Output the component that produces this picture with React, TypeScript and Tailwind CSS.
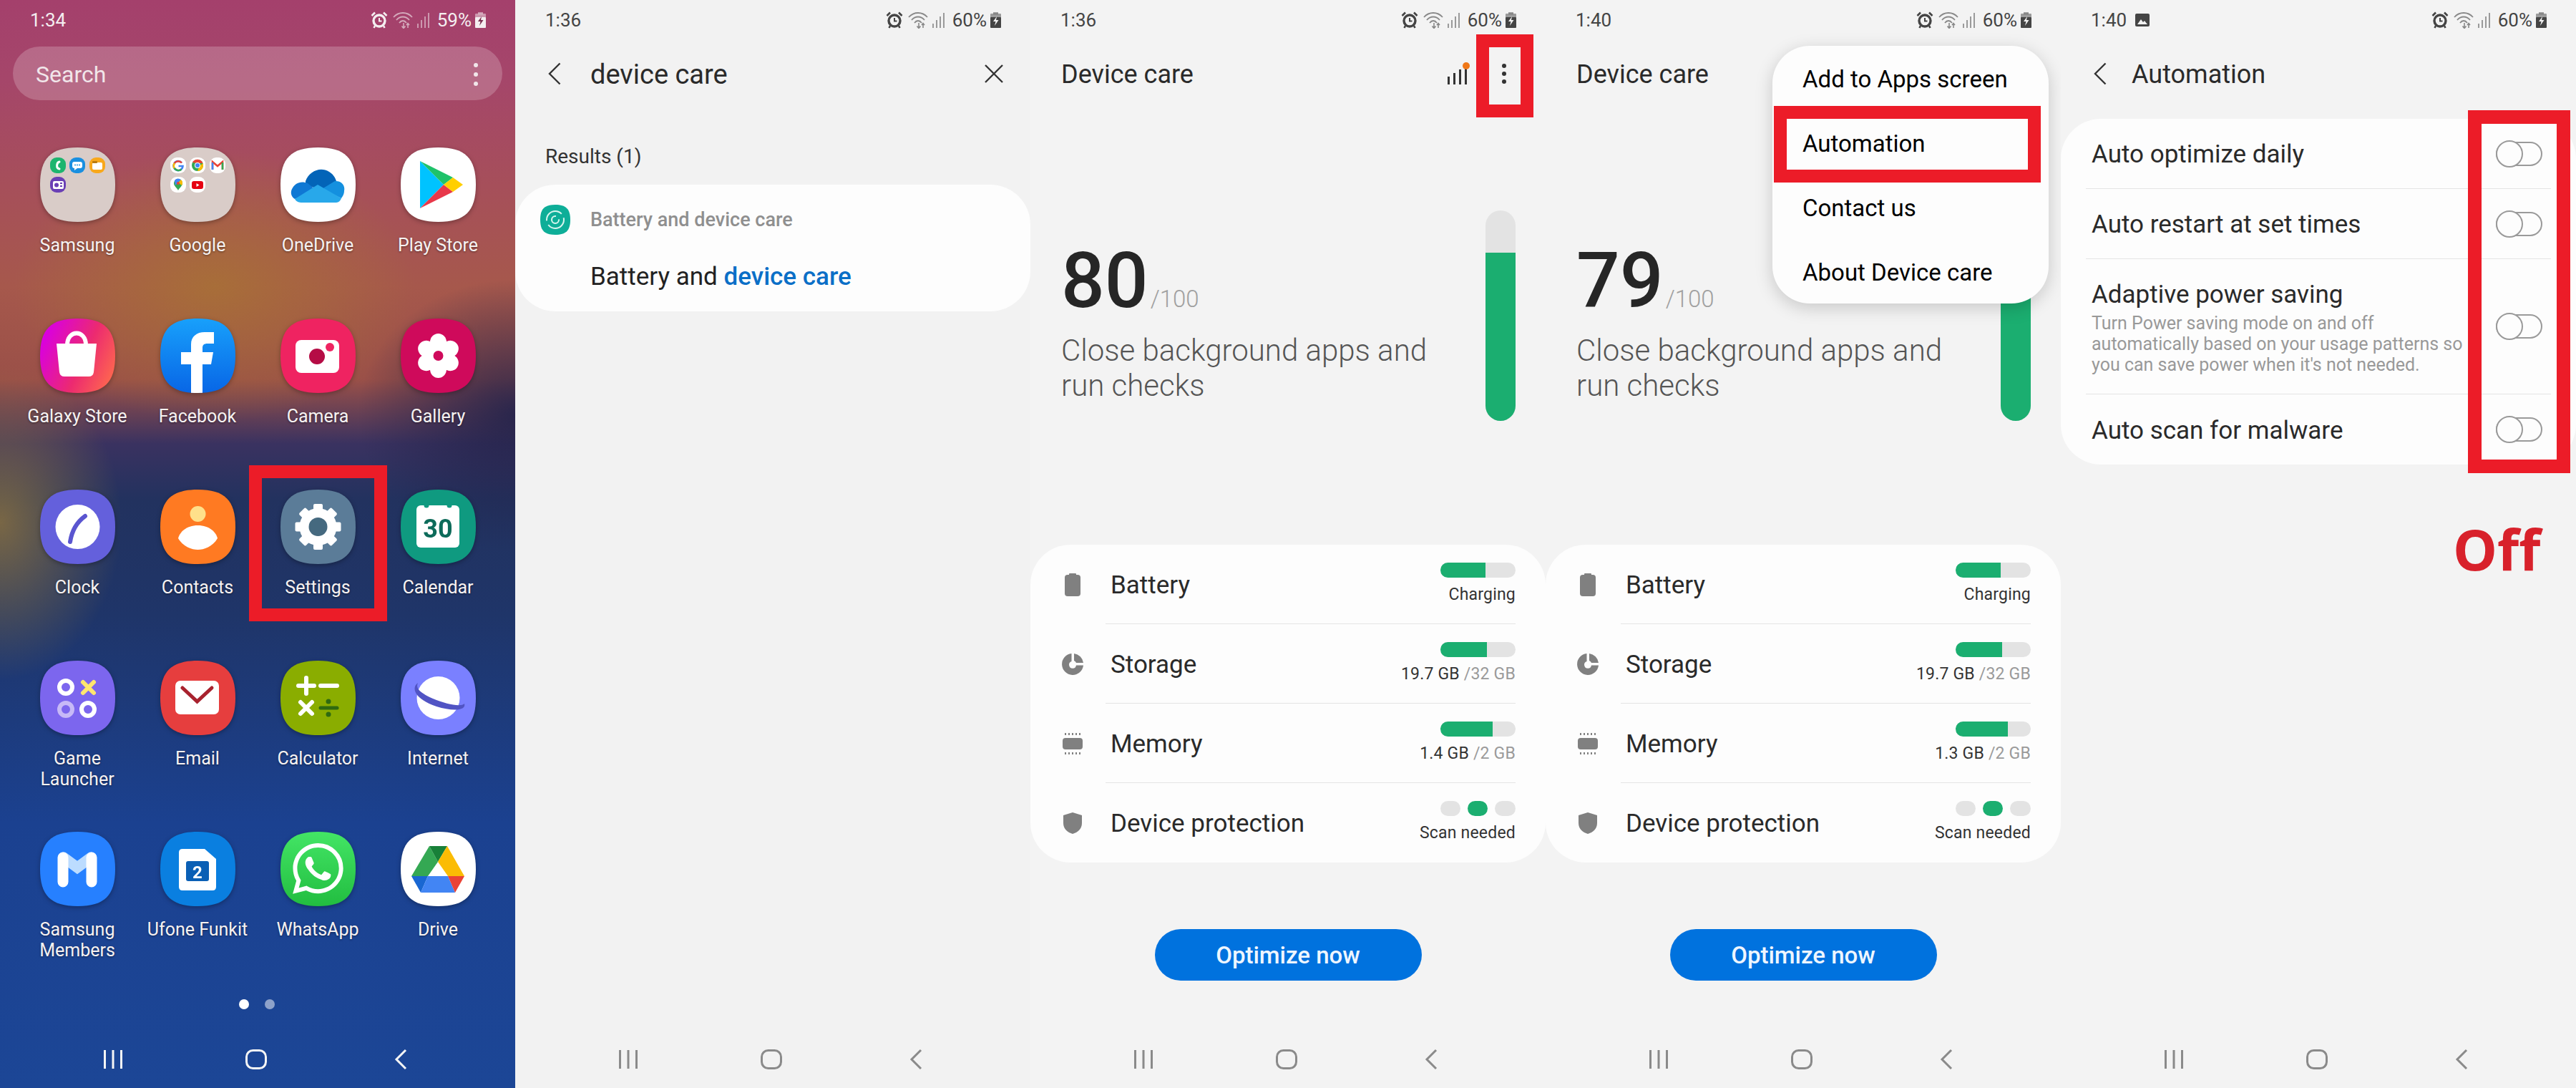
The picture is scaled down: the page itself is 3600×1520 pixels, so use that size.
import type { ReactNode } from "react";

const squircle =
  "M52.5 0C90 0 105 15 105 52C105 89 90 104 52.5 104C15 104 0 89 0 52C0 15 15 0 52.5 0Z";

function AppGlyph({ fill, children }: { fill: string; children?: ReactNode }) {
  return (
    <svg
      viewBox="0 0 105 104"
      className="h-[104px] w-[105px] overflow-visible drop-shadow-[0_2px_3px_rgba(0,0,0,0.3)]"
    >
      <defs>
        <clipPath id="squircleClip">
          <path d={squircle} />
        </clipPath>
        <linearGradient id="storeGrad" x1="0" y1="0.35" x2="1" y2="0.8">
          <stop offset="0" stopColor="#d900e0" />
          <stop offset="0.55" stopColor="#ec2a70" />
          <stop offset="1" stopColor="#ff6a4d" />
        </linearGradient>
        <linearGradient id="fbGrad" x1="0" y1="0" x2="0" y2="1">
          <stop offset="0" stopColor="#18a0fb" />
          <stop offset="1" stopColor="#0866e6" />
        </linearGradient>
        <linearGradient id="waGrad" x1="0" y1="0" x2="0" y2="1">
          <stop offset="0" stopColor="#43e565" />
          <stop offset="1" stopColor="#22bd40" />
        </linearGradient>
      </defs>
      <path d={squircle} fill={fill} />
      <g clipPath="url(#squircleClip)">{children}</g>
    </svg>
  );
}

function Mini({ x, y, fill, children }: { x: number; y: number; fill: string; children?: ReactNode }) {
  return (
    <g transform={`translate(${x - 11} ${y - 11})`}>
      <rect width="22" height="22" rx="9" fill={fill} />
      {children}
    </g>
  );
}

const samsungFolder = (
  <AppGlyph fill="#d9ccc8">
    <Mini x={25} y={25} fill="#1db56e">
      <path d="M13 6C9 7 8 15 13 16" stroke="#fff" strokeWidth="3" fill="none" strokeLinecap="round" />
    </Mini>
    <Mini x={52} y={25} fill="#1a8fe0">
      <rect x="4" y="6" width="14" height="9" rx="3" fill="#fff" />
      <path d="M7 14v4l4-3z" fill="#fff" />
      <circle cx="8" cy="10.5" r="1" fill="#1a8fe0" />
      <circle cx="11" cy="10.5" r="1" fill="#1a8fe0" />
      <circle cx="14" cy="10.5" r="1" fill="#1a8fe0" />
    </Mini>
    <Mini x={80} y={25} fill="#f8a81b">
      <rect x="4" y="7" width="14" height="10" rx="2" fill="#fff" />
      <rect x="4" y="5" width="7" height="3" rx="1" fill="#b87a10" />
    </Mini>
    <Mini x={25} y={52} fill="#6a3fb5">
      <rect x="4" y="6" width="15" height="11" rx="2" fill="#fff" />
      <circle cx="9" cy="11.5" r="3" fill="#6a3fb5" />
      <rect x="14" y="8" width="3" height="2" fill="#6a3fb5" />
      <rect x="14" y="12" width="3" height="2" fill="#6a3fb5" />
    </Mini>
  </AppGlyph>
);

const googleFolder = (
  <AppGlyph fill="#d9ccc8">
    <Mini x={25} y={25} fill="#fff">
      <path d="M16 7.5A6.5 6.5 0 1 0 17.5 12H11.5" fill="none" stroke="#4285f4" strokeWidth="2.6" />
      <path d="M16 7.5A6.5 6.5 0 0 0 5.8 8" fill="none" stroke="#ea4335" strokeWidth="2.6" />
      <path d="M5.8 8A6.5 6.5 0 0 0 5.8 15" fill="none" stroke="#fbbc04" strokeWidth="2.6" />
      <path d="M5.8 15A6.5 6.5 0 0 0 15.5 16.5" fill="none" stroke="#34a853" strokeWidth="2.6" />
    </Mini>
    <Mini x={52} y={25} fill="#fff">
      <circle cx="11" cy="11" r="8" fill="#34a853" />
      <path d="M4 7A8 8 0 0 1 18.5 8H11Z" fill="#ea4335" />
      <path d="M18.5 8A8 8 0 0 1 11 19L14 12Z" fill="#fbbc04" />
      <circle cx="11" cy="11" r="4" fill="#fff" />
      <circle cx="11" cy="11" r="3" fill="#4285f4" />
    </Mini>
    <Mini x={80} y={25} fill="#fff">
      <path d="M4 17V6l7 6 7-6v11" fill="none" stroke="#ea4335" strokeWidth="2.6" />
      <path d="M4 17V7" stroke="#4285f4" strokeWidth="2.6" />
      <path d="M18 17V7" stroke="#34a853" strokeWidth="2.6" />
    </Mini>
    <Mini x={25} y={52} fill="#fff">
      <path d="M11 3a6 6 0 0 1 6 6c0 4-4 6-6 10-2-4-6-6-6-10a6 6 0 0 1 6-6Z" fill="#34a853" />
      <path d="M6 5a6 6 0 0 1 9-1L7 12Z" fill="#4285f4" />
      <path d="M15 4a6 6 0 0 1 1 8l-5-4Z" fill="#fbbc04" />
      <circle cx="11" cy="9" r="2" fill="#ea4335" />
    </Mini>
    <Mini x={52} y={52} fill="#fff">
      <rect x="3" y="6" width="16" height="11" rx="3" fill="#e60012" />
      <path d="M9.5 9v5l4-2.5z" fill="#fff" />
    </Mini>
  </AppGlyph>
);

const gearTeeth = [0, 45, 90, 135, 180, 225, 270, 315];

const apps: { label: ReactNode; icon: ReactNode }[] = [
  { label: "Samsung", icon: samsungFolder },
  { label: "Google", icon: googleFolder },
  {
    label: "OneDrive",
    icon: (
      <AppGlyph fill="#fff">
        <path d="M35 47C40 33 56 26 68 34C73 37 76 41 78 47L58 60L35 52Z" fill="#0364b8" />
        <path d="M38 50C28 46 20 50 16 58C13 64 16 70 20 72L50 60Z" fill="#0f78d4" />
        <path d="M76 47C84 46 91 52 89 61C89 65 87 68 85 71L58 58Z" fill="#1490df" />
        <path d="M20 72C22 76 26 77 30 77H78C81 77 84 74 85 71L52 52Z" fill="#28a8ea" />
      </AppGlyph>
    ),
  },
  {
    label: "Play Store",
    icon: (
      <AppGlyph fill="#fff">
        <path d="M27 19V85L60 52Z" fill="#00c3ff" />
        <path d="M27 19L73 42L60 52Z" fill="#1fc26a" />
        <path d="M27 85L73 62L60 52Z" fill="#e8384a" />
        <path d="M73 42L87 52L73 62L60 52Z" fill="#ffcf00" />
      </AppGlyph>
    ),
  },
  {
    label: "Galaxy Store",
    icon: (
      <AppGlyph fill="url(#storeGrad)">
        <path d="M38 37C38 15 64 15 64 37" fill="none" stroke="#fff" strokeWidth="6" />
        <path d="M23 35H79L75 75Q74 81 68 81H34Q28 81 27 75Z" fill="#fff" />
      </AppGlyph>
    ),
  },
  {
    label: "Facebook",
    icon: (
      <AppGlyph fill="url(#fbGrad)">
        <path
          d="M43 104V64H29V47H43V36C43 25 51 19 62 19H75V35H66C61 35 59 37 59 41V47H74L71 64H59V104Z"
          fill="#fff"
        />
      </AppGlyph>
    ),
  },
  {
    label: "Camera",
    icon: (
      <AppGlyph fill="#ef2361">
        <rect x="21" y="30" width="61" height="46" rx="8" fill="#fff" />
        <circle cx="51" cy="53" r="11" fill="#b50c45" />
        <circle cx="69" cy="40" r="6" fill="#ef2361" />
      </AppGlyph>
    ),
  },
  {
    label: "Gallery",
    icon: (
      <AppGlyph fill="#cf0a5b">
        {[0, 60, 120, 180, 240, 300].map((a) => (
          <ellipse key={a} cx="52.5" cy="33" rx="11.5" ry="12" fill="#fff" transform={`rotate(${a} 52.5 52)`} />
        ))}
        <circle cx="52.5" cy="52" r="11" fill="#fff" />
        <circle cx="52.5" cy="52" r="7" fill="#cf0a5b" />
      </AppGlyph>
    ),
  },
  {
    label: "Clock",
    icon: (
      <AppGlyph fill="#6460dc">
        <circle cx="52.5" cy="52" r="31" fill="#fff" />
        <path d="M42 73C44 60 49 47 63 37" fill="none" stroke="#5a55d0" strokeWidth="6" strokeLinecap="round" />
      </AppGlyph>
    ),
  },
  {
    label: "Contacts",
    icon: (
      <AppGlyph fill="#ff7a22">
        <circle cx="52.5" cy="34" r="11" fill="#ffe08a" />
        <path d="M52.5 50C36 50 27 60 25 68C32 80 44 84 52.5 84C61 84 73 80 80 68C78 60 69 50 52.5 50Z" fill="#fff" />
      </AppGlyph>
    ),
  },
  {
    label: "Settings",
    icon: (
      <AppGlyph fill="#5b7c98">
        {gearTeeth.map((a) => (
          <rect key={a} x="46" y="20" width="13" height="14" rx="2" fill="#fff" transform={`rotate(${a} 52.5 52)`} />
        ))}
        <circle cx="52.5" cy="52" r="26" fill="#fff" />
        <circle cx="52.5" cy="52" r="13" fill="#45697f" />
      </AppGlyph>
    ),
  },
  {
    label: "Calendar",
    icon: (
      <AppGlyph fill="#0f9a80">
        <rect x="22" y="22" width="60" height="59" rx="6" fill="#fff" />
        <circle cx="36" cy="22" r="3.5" fill="#0f9a80" />
        <circle cx="68" cy="22" r="3.5" fill="#0f9a80" />
        <text x="52" y="67" textAnchor="middle" fontSize="36" fontWeight="700" fontFamily="Roboto, sans-serif" fill="#0d6b5a">
          30
        </text>
      </AppGlyph>
    ),
  },
  {
    label: (
      <>
        Game
        <br />
        Launcher
      </>
    ),
    icon: (
      <AppGlyph fill="#7c66ee">
        <circle cx="36" cy="37" r="9" fill="none" stroke="#fff" strokeWidth="6" />
        <path d="M60 30L75 45M75 30L60 45" stroke="#ffe66e" strokeWidth="6" strokeLinecap="round" />
        <circle cx="36" cy="68" r="9" fill="none" stroke="#c7b9f7" strokeWidth="6" />
        <circle cx="67" cy="68" r="9" fill="none" stroke="#fff" strokeWidth="6" />
      </AppGlyph>
    ),
  },
  {
    label: "Email",
    icon: (
      <AppGlyph fill="#e63e3e">
        <rect x="21" y="28" width="61" height="47" rx="7" fill="#fff" />
        <path d="M31 38L51.5 57L72 38" fill="none" stroke="#a8222e" strokeWidth="5" strokeLinecap="round" />
      </AppGlyph>
    ),
  },
  {
    label: "Calculator",
    icon: (
      <AppGlyph fill="#8aad00">
        <path d="M25 35H47M36 24V46" stroke="#fff" strokeWidth="6" strokeLinecap="round" />
        <path d="M56 35H79" stroke="#fff" strokeWidth="6" strokeLinecap="round" />
        <path d="M28 58L44 74M44 58L28 74" stroke="#fff" strokeWidth="6" strokeLinecap="round" />
        <path d="M56 66H79" stroke="#2f6a10" strokeWidth="5" strokeLinecap="round" />
        <circle cx="67" cy="57" r="3.5" fill="#2f6a10" />
        <circle cx="67" cy="75" r="3.5" fill="#2f6a10" />
      </AppGlyph>
    ),
  },
  {
    label: "Internet",
    icon: (
      <AppGlyph fill="#7a80ff">
        <circle cx="52.5" cy="52" r="30" fill="#fff" />
        <path d="M24 31C14 38 20 54 50 64C72 71 92 70 89 60C84 65 64 61 45 53C30 46 20 40 24 31Z" fill="#5154c4" />
      </AppGlyph>
    ),
  },
  {
    label: (
      <>
        Samsung
        <br />
        Members
      </>
    ),
    icon: (
      <AppGlyph fill="#2680ff">
        <path d="M33 36L52 50L71 36" fill="none" stroke="#bcdcff" strokeWidth="15" strokeLinecap="round" />
        <path d="M32 36V70M72 36V70" stroke="#fff" strokeWidth="15" strokeLinecap="round" />
      </AppGlyph>
    ),
  },
  {
    label: "Ufone Funkit",
    icon: (
      <AppGlyph fill="#0a7fe0">
        <path d="M31 24H62L78 38V77Q78 82 73 82H31Q26 82 26 77V29Q26 24 31 24Z" fill="#fff" />
        <rect x="36" y="41" width="32" height="28" rx="3" fill="#0a5fb5" />
        <text x="52" y="65" textAnchor="middle" fontSize="24" fontWeight="700" fontFamily="Roboto, sans-serif" fill="#fff">
          2
        </text>
      </AppGlyph>
    ),
  },
  {
    label: "WhatsApp",
    icon: (
      <AppGlyph fill="url(#waGrad)">
        <path
          transform="translate(17 16) scale(2.95)"
          fill="#fff"
          d="M17.472 14.382c-.297-.149-1.758-.867-2.03-.967-.273-.099-.471-.148-.67.15-.197.297-.767.966-.94 1.164-.173.199-.347.223-.644.075-.297-.15-1.255-.463-2.39-1.475-.883-.788-1.48-1.761-1.653-2.059-.173-.297-.018-.458.13-.606.134-.133.298-.347.446-.52.149-.174.198-.298.298-.497.099-.198.05-.371-.025-.52-.075-.149-.669-1.612-.916-2.207-.242-.579-.487-.5-.669-.51-.173-.008-.371-.01-.57-.01-.198 0-.52.074-.792.372-.272.297-1.04 1.016-1.04 2.479 0 1.462 1.065 2.875 1.213 3.074.149.198 2.096 3.2 5.077 4.487.709.306 1.262.489 1.694.625.712.227 1.36.195 1.871.118.571-.085 1.758-.719 2.006-1.413.248-.694.248-1.289.173-1.413-.074-.124-.272-.198-.57-.347m-5.421 7.403h-.004a9.87 9.87 0 01-5.031-1.378l-.361-.214-3.741.982.998-3.648-.235-.374a9.86 9.86 0 01-1.51-5.26c.001-5.45 4.436-9.884 9.888-9.884 2.64 0 5.122 1.03 6.988 2.898a9.825 9.825 0 012.893 6.994c-.003 5.45-4.437 9.884-9.885 9.884m8.413-18.297A11.815 11.815 0 0012.05 0C5.495 0 .16 5.335.157 11.892c0 2.096.547 4.142 1.588 5.945L.057 24l6.305-1.654a11.882 11.882 0 005.683 1.448h.005c6.554 0 11.89-5.335 11.893-11.893a11.821 11.821 0 00-3.48-8.413z"
        />
      </AppGlyph>
    ),
  },
  {
    label: "Drive",
    icon: (
      <AppGlyph fill="#fff">
        <path d="M40 20L52 42L38 62H15Z" fill="#34a853" />
        <path d="M40 20H65L52 42Z" fill="#188038" />
        <path d="M65 20L89 62H66L52 42Z" fill="#fbbc04" />
        <path d="M15 62H38L28 85Z" fill="#1967d2" />
        <path d="M38 62H66L76 85H28Z" fill="#4285f4" />
        <path d="M66 62H89L76 85Z" fill="#ea4335" />
      </AppGlyph>
    ),
  },
];

function StatusBar({ time, percent, light, image }: { time: string; percent: string; light?: boolean; image?: boolean }) {
  return (
    <div
      className={`flex h-[56px] shrink-0 items-center pl-[42px] pr-[41px] text-[26px] ${
        light ? "text-[#f4eef0]" : "text-[#444]"
      }`}
    >
      <span>{time}</span>
      {image && (
        <svg viewBox="0 0 20 18" className="ml-[12px] h-[18px] w-[20px]">
          <rect width="20" height="18" rx="2" fill="currentColor" />
          <path d="M3 15L8 8L11 12L13 10L17 15Z" fill="#f2f2f2" />
        </svg>
      )}
      <svg viewBox="0 0 24 24" className="ml-auto h-[24px] w-[24px]" fill="none" stroke="currentColor">
        <circle cx="12" cy="13" r="8" strokeWidth="3.4" />
        <path d="M12 9v4.5h3.5" strokeWidth="2" />
        <path d="M1.5 6L6 1.5M22.5 6L18 1.5" strokeWidth="2.6" />
        <path d="M6 20L4.5 23M18 20L19.5 23" strokeWidth="2.6" />
      </svg>
      <svg viewBox="0 0 28 24" className="ml-[7px] h-[24px] w-[28px] opacity-60" fill="none" stroke="currentColor">
        <path d="M1 8C8 0 20 0 27 8M5 12C10 6 18 6 23 12M9 16C12 12 16 12 19 16" strokeWidth="1.8" />
        <path d="M15 16V23M12.5 20.5L15 23.5L17.5 20.5M21 23V17M19 19L21 16.5L23 19" strokeWidth="1.6" />
      </svg>
      <svg viewBox="0 0 18 22" className="ml-[6px] h-[22px] w-[18px] opacity-50" fill="currentColor">
        <rect x="0" y="16" width="2" height="6" />
        <rect x="5" y="11" width="2" height="11" />
        <rect x="10" y="6" width="2" height="16" />
        <rect x="15" y="1" width="2" height="21" />
      </svg>
      <span className="ml-[10px]">{percent}</span>
      <svg viewBox="0 0 15 22" className="ml-[5px] h-[22px] w-[15px]" fill="currentColor">
        <rect x="4" y="0" width="7" height="3" opacity="0.5" />
        <rect x="0" y="2" width="15" height="6" rx="1" opacity="0.5" />
        <rect x="0" y="7" width="15" height="15" rx="1" />
        <path d="M9 6L4 13H7.5L6 19L11.5 11H8Z" fill={light ? "#7a3050" : "#f2f2f2"} />
      </svg>
    </div>
  );
}

function NavBar({ light }: { light?: boolean }) {
  const color = light ? "#f5f5f5" : "#8a8a8a";
  return (
    <div className="mt-auto flex h-[80px] shrink-0 items-center pl-[58px]">
      <div className="flex w-[200px] justify-center">
        <svg width="26" height="28" viewBox="0 0 26 28" stroke={color} strokeWidth="3">
          <path d="M1.5 1V27M13 1V27M24.5 1V27" />
        </svg>
      </div>
      <div className="flex w-[200px] justify-center">
        <svg width="30" height="28" viewBox="0 0 30 28" fill="none" stroke={color} strokeWidth="3">
          <rect x="1.5" y="1.5" width="27" height="25" rx="9" />
        </svg>
      </div>
      <div className="flex w-[204px] justify-center">
        <svg width="18" height="30" viewBox="0 0 18 30" fill="none" stroke={color} strokeWidth="3">
          <path d="M16 2L3 15L16 28" />
        </svg>
      </div>
    </div>
  );
}

function Chevron() {
  return (
    <svg width="18" height="32" viewBox="0 0 18 32" fill="none" stroke="#333" strokeWidth="2.4" className="shrink-0">
      <path d="M16.5 1.5L2 16L16.5 30.5" />
    </svg>
  );
}

function RedBox({ className }: { className: string }) {
  return <div className={`absolute border-[18px] border-[#ec1c28] ${className}`} />;
}

function HomeScreen() {
  return (
    <div className="relative flex flex-col bg-[radial-gradient(ellipse_280px_190px_at_300px_400px,rgba(168,115,52,0.8),transparent),radial-gradient(ellipse_170px_220px_at_0px_730px,rgba(150,120,60,0.75),transparent),radial-gradient(ellipse_220px_190px_at_720px_580px,rgba(35,35,75,0.9),transparent),linear-gradient(180deg,#a4406c_0px,#a5466a_110px,#a64f5a_260px,#a6584c_400px,#9a5048_530px,#3a3260_620px,#22325f_700px,#1f3569_860px,#1b4190_1150px,#1c4696_100%)]">
      <StatusBar time="1:34" percent="59%" light />
      <div className="mx-[18px] mt-[9px] flex h-[75px] items-center justify-between rounded-full bg-white/20 pl-[32px] pr-[34px] pt-[2px] text-[32px] text-[#f1e6ea]">
        <span>Search</span>
        <span className="flex flex-col gap-[7px]">
          <span className="size-[6px] rounded-full bg-[#f1e6ea]" />
          <span className="size-[6px] rounded-full bg-[#f1e6ea]" />
          <span className="size-[6px] rounded-full bg-[#f1e6ea]" />
        </span>
      </div>
      <div className="mt-[66px] grid grid-cols-[repeat(4,168px)] grid-rows-[repeat(4,239px)_234px] pl-[24px]">
        {apps.map((app, i) => (
          <div key={i} className="flex flex-col items-center">
            {app.icon}
            <div className="mt-[18px] whitespace-nowrap text-center text-[25px] leading-[29px] text-[#f6f2f2] [text-shadow:0_1px_3px_rgba(0,0,0,0.45)]">
              {app.label}
            </div>
          </div>
        ))}
      </div>
      <div className="flex h-[14px] items-center gap-[22px] pl-[334px]">
        <span className="size-[14px] rounded-full bg-white" />
        <span className="size-[14px] rounded-full bg-white/50" />
      </div>
      <NavBar light />
      <RedBox className="left-[348px] top-[650px] h-[218px] w-[193px]" />
    </div>
  );
}

function SearchScreen() {
  return (
    <div className="flex flex-col bg-[#f2f2f2]">
      <StatusBar time="1:36" percent="60%" />
      <div className="flex h-[94px] shrink-0 items-center pl-[46px] pr-[38px]">
        <Chevron />
        <span className="ml-[41px] pt-[2px] text-[38px] text-[#2a2a2a]">device care</span>
        <svg width="26" height="26" viewBox="0 0 26 26" stroke="#333" strokeWidth="2.4" className="ml-auto">
          <path d="M1 1L25 25M25 1L1 25" />
        </svg>
      </div>
      <div className="mt-[51px] pl-[42px] text-[28px] leading-[36px] text-[#333]">Results (1)</div>
      <div className="mt-[21px] h-[177px] rounded-[56px] bg-[#fdfdfd] pl-[35px] pt-[28px]">
        <div className="flex items-center">
          <svg viewBox="0 0 42 42" className="size-[42px]">
            <path d="M21 0C36 0 42 6 42 21C42 36 36 42 21 42C6 42 0 36 0 21C0 6 6 0 21 0Z" fill="#0eae98" />
            <circle cx="21" cy="21" r="12" fill="none" stroke="#d8f5ef" strokeWidth="2" strokeDasharray="30 6" />
            <circle cx="21" cy="21" r="5" fill="none" stroke="#d8f5ef" strokeWidth="2" strokeDasharray="24 6" />
          </svg>
          <span className="ml-[28px] text-[27px] font-medium text-[#8f8f8f]">Battery and device care</span>
        </div>
        <div className="ml-[70px] mt-[37px] text-[35px] leading-[44px] text-[#222]">
          Battery and <span className="font-medium text-[#0b6fc7]">device care</span>
        </div>
      </div>
      <NavBar />
    </div>
  );
}

function RowIcon({ kind }: { kind: string }) {
  if (kind === "battery") {
    return (
      <svg width="22" height="32" viewBox="0 0 22 32" fill="#808080">
        <rect x="6" y="0" width="10" height="4" rx="1" />
        <rect x="0" y="2" width="22" height="30" rx="4" />
      </svg>
    );
  }
  if (kind === "storage") {
    return (
      <svg width="30" height="30" viewBox="0 0 30 30" fill="#808080">
        <path d="M13.5 0V11A5 5 0 1 0 20 16.5H30A15 15 0 1 1 13.5 0Z" />
        <path d="M17 0A15 15 0 0 1 30 13H20A5 5 0 0 0 17 10Z" />
      </svg>
    );
  }
  if (kind === "memory") {
    return (
      <svg width="28" height="30" viewBox="0 0 28 30" fill="#808080">
        <rect x="0" y="7" width="28" height="16" rx="4" />
        {[4, 9, 14, 19, 24].map((x) => (
          <g key={x}>
            <rect x={x - 1} y="0" width="2" height="3" />
            <rect x={x - 1} y="27" width="2" height="3" />
          </g>
        ))}
      </svg>
    );
  }
  return (
    <svg width="26" height="30" viewBox="0 0 26 30" fill="#808080">
      <path d="M13 0L26 4V15C26 23 20 28 13 30C6 28 0 23 0 15V4Z" />
    </svg>
  );
}

function CareRow({
  kind,
  label,
  fill,
  main,
  total,
  last,
}: {
  kind: string;
  label: string;
  fill?: number;
  main: string;
  total?: string;
  last?: boolean;
}) {
  return (
    <div className="flex h-[111px] items-stretch">
      <div className="flex w-[105px] shrink-0 items-center justify-center pl-[13px]">
        <RowIcon kind={kind} />
      </div>
      <div className={`mr-[42px] flex flex-1 justify-between pl-[7px] ${last ? "" : "border-b-[1px] border-[#e4e4e4]"}`}>
        <span className="self-center pt-[4px] text-[35px] text-[#2a2a2a]">{label}</span>
        <div className="flex flex-col items-end pt-[25px]">
          {fill ? (
            <div className="flex h-[21px] w-[105px] overflow-hidden rounded-full bg-[#e3e3e3]">
              <div className="bg-[#1bae70]" style={{ width: fill }} />
            </div>
          ) : (
            <div className="flex h-[21px] w-[105px] justify-between">
              <span className="w-[28px] rounded-full bg-[#e3e3e3]" />
              <span className="w-[28px] rounded-full bg-[#1bae70]" />
              <span className="w-[29px] rounded-full bg-[#e3e3e3]" />
            </div>
          )}
          <div className="mt-[10px] whitespace-nowrap text-[23px] leading-[28px] tracking-[0.2px] text-[#333]">
            {main}
            {total && <span className="text-[#9a9a9a]"> {total}</span>}
          </div>
        </div>
      </div>
    </div>
  );
}

const menuItems = ["Add to Apps screen", "Automation", "Contact us", "About Device care"];

function CareScreen({
  time,
  score,
  memory,
  barTop,
  menu,
}: {
  time: string;
  score: number;
  memory: string;
  barTop: number;
  menu?: boolean;
}) {
  return (
    <div className="relative flex flex-col bg-[#f3f3f3]">
      <StatusBar time={time} percent="60%" />
      <div className="flex h-[94px] shrink-0 items-center pl-[43px] pr-[55px]">
        <span className="pt-[2px] text-[36px] text-[#2a2a2a]">Device care</span>
        {!menu && (
          <>
            <svg width="32" height="34" viewBox="0 0 32 34" className="ml-auto">
              <g fill="#333">
                <rect x="0" y="21" width="3" height="11" />
                <rect x="8" y="16" width="3" height="16" />
                <rect x="16" y="11" width="3" height="21" />
                <rect x="24" y="6" width="3" height="26" />
              </g>
              <circle cx="26" cy="6" r="5" fill="#f07818" />
            </svg>
            <span className="ml-[44px] flex flex-col gap-[5px]">
              <span className="size-[6px] rounded-full bg-[#333]" />
              <span className="size-[6px] rounded-full bg-[#333]" />
              <span className="size-[6px] rounded-full bg-[#333]" />
            </span>
          </>
        )}
      </div>
      <div className="mt-[144px] flex h-[294px] justify-between pl-[43px] pr-[42px]">
        <div>
          <div className="mt-[45px] flex items-baseline">
            <span className="text-[107px] font-medium leading-[107px] text-[#262626]">{score}</span>
            <span className="ml-[3px] text-[33px] font-light text-[#a0a0a0]">/100</span>
          </div>
          <p className="mt-[19px] text-[42px] font-light leading-[49px] text-[#555]">
            Close background apps and
            <br />
            run checks
          </p>
        </div>
        <div className="flex w-[42px] flex-col overflow-hidden rounded-full bg-[#e3e3e3]" style={{ paddingTop: barTop }}>
          <div className="flex-1 bg-[#1bae70]" />
        </div>
      </div>
      <div className="mt-[173px] h-[444px] rounded-[56px] bg-[#fdfdfd]">
        <CareRow kind="battery" label="Battery" fill={63} main="Charging" />
        <CareRow kind="storage" label="Storage" fill={65} main="19.7 GB" total="/32 GB" />
        <CareRow kind="memory" label="Memory" fill={73} main={memory} total="/2 GB" />
        <CareRow kind="shield" label="Device protection" main="Scan needed" last />
      </div>
      <div className="mx-auto mt-[93px] flex h-[72px] w-[373px] items-center justify-center rounded-full bg-[#0072de] pt-[2px] text-[33px] font-medium text-[#eef6ff]">
        Optimize now
      </div>
      <NavBar />
      {menu ? (
        <>
          <div className="absolute left-[317px] top-[64px] h-[360px] w-[386px] rounded-[52px] bg-[#fdfdfd] pt-[2px] shadow-[0_6px_24px_rgba(0,0,0,0.18)]">
            {menuItems.map((item) => (
              <div key={item} className="flex h-[90px] items-center pl-[42px] text-[33px] text-black">
                {item}
              </div>
            ))}
          </div>
          <RedBox className="left-[319px] top-[148px] h-[107px] w-[373px]" />
        </>
      ) : (
        <RedBox className="left-[623px] top-[48px] h-[116px] w-[80px]" />
      )}
    </div>
  );
}

function Toggle() {
  return (
    <div className="flex h-[34px] w-[65px] shrink-0 items-center rounded-full border-2 border-[#9a9a9a]">
      <span className="-ml-[2px] size-[38px] shrink-0 rounded-full border-2 border-[#9a9a9a] bg-[#fdfdfd]" />
    </div>
  );
}

function AutoRow({ title, sub, last }: { title: string; sub?: string[]; last?: boolean }) {
  return (
    <div
      className={`mx-[35px] flex items-center justify-between pl-[8px] pr-[12px] ${
        sub ? "h-[189px]" : "h-[98px]"
      } ${last ? "" : "border-b-[1px] border-[#e4e4e4]"}`}
    >
      <div className="pt-[3px]">
        <div className="text-[35px] leading-[40px] text-[#2a2a2a]">{title}</div>
        {sub && (
          <div className="mt-[5px] text-[25px] leading-[29px] text-[#999]">
            {sub.map((line) => (
              <div key={line} className="whitespace-nowrap">
                {line}
              </div>
            ))}
          </div>
        )}
      </div>
      <Toggle />
    </div>
  );
}

function AutomationScreen() {
  return (
    <div className="relative flex flex-col bg-[#f3f3f3]">
      <StatusBar time="1:40" percent="60%" image />
      <div className="flex h-[94px] shrink-0 items-center pl-[46px]">
        <Chevron />
        <span className="ml-[35px] pt-[2px] text-[36px] text-[#2a2a2a]">Automation</span>
      </div>
      <div className="mt-[16px] h-[483px] rounded-[56px] bg-[#fdfdfd]">
        <AutoRow title="Auto optimize daily" />
        <AutoRow title="Auto restart at set times" />
        <AutoRow
          title="Adaptive power saving"
          sub={[
            "Turn Power saving mode on and off",
            "automatically based on your usage patterns so",
            "you can save power when it's not needed.",
          ]}
        />
        <AutoRow title="Auto scan for malware" last />
      </div>
      <div className="ml-[548px] mt-[78px] font-['Open_Sans',sans-serif] text-[78px] font-bold leading-[80px] text-[#d8212b]">
        Off
      </div>
      <NavBar />
      <RedBox className="left-[569px] top-[154px] h-[507px] w-[143px] border-[19px]" />
    </div>
  );
}

export default function App() {
  return (
    <div className="grid h-[1520px] w-[3600px] grid-cols-5 overflow-hidden font-['Roboto',sans-serif]">
      <HomeScreen />
      <SearchScreen />
      <CareScreen time="1:36" score={80} memory="1.4 GB" barTop={59} />
      <CareScreen time="1:40" score={79} memory="1.3 GB" barTop={59} menu />
      <AutomationScreen />
    </div>
  );
}
